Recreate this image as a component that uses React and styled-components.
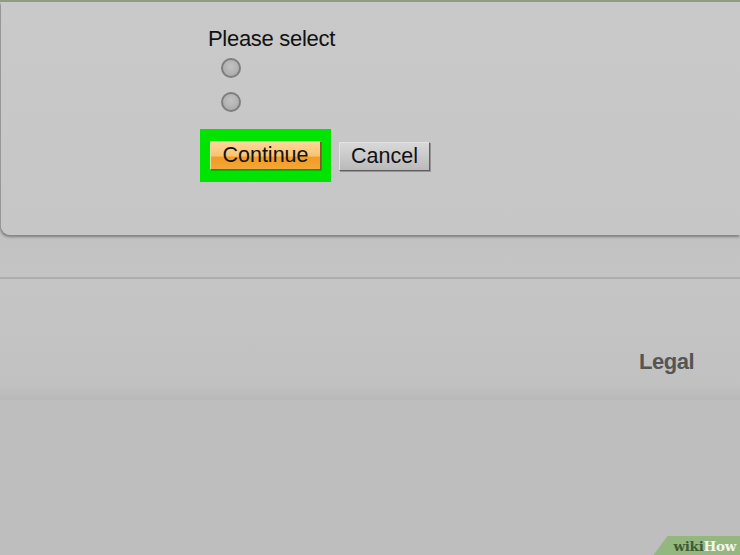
import React from 'react'
import styled, { createGlobalStyle } from 'styled-components';

const Global = createGlobalStyle`
html, body { margin:0; padding:0; }
body { background:#bfbfbf; font-family:"Liberation Sans", Arial, sans-serif; }
`

const App = () => {
    return(
    <Page>
    <Global/>
    <TopStrip/>
    <Panel>
    <Form>
    <Prompt>Please select</Prompt>
    <Radio/>
    <Radio second/>
    <Buttons>
    <Highlight>
    <Button primary>Continue</Button>
    </Highlight>
    <Button>Cancel</Button>
    </Buttons>
    </Form>
    </Panel>
    <Band/>
    <Footer>
    <Legal>Legal</Legal>
    </Footer>
    <Bottom>
    <Badge><Wiki>wiki</Wiki><How>How</How></Badge>
    </Bottom>
    </Page>
    );
};

export default App;

const Page = styled.div`
width:740px;
height:555px;
overflow:hidden;
display:flex;
flex-direction:column;
background:#bfbfbf;
`
const TopStrip = styled.div`
height:2px;
background:#8e9c84;
`
const Panel = styled.div`
height:233px;
margin-left:1px;
background:linear-gradient(180deg,#c9c9c9 0%,#c6c6c6 100%);
border-bottom-left-radius:9px;
box-shadow: -1px 2px 2px rgba(0,0,0,0.25), 0 3px 3px rgba(0,0,0,0.08);
position:relative;
z-index:1;
`
const Form = styled.div`
padding:24px 0 0 207px;
display:flex;
flex-direction:column;
align-items:flex-start;
`
const Prompt = styled.div`
font-size:22px;
color:#111;
line-height:26px;
letter-spacing:-0.3px;
`
const Radio = styled.span`
width:20px;
height:20px;
border-radius:50%;
margin:${p => p.second ? '14px' : '6px'} 0 0 13px;
box-sizing:border-box;
border:2px solid #7e7e7e;
background:radial-gradient(circle at 50% 40%,#c2c2c2,#a6a6a6);
`
const Buttons = styled.div`
display:flex;
align-items:center;
gap:8px;
margin:17px 0 0 -8px;
`
const Highlight = styled.div`
background:#00e400;
padding:12px 10px 12px 10px;
display:flex;
`
const Button = styled.div`
height:29px;
box-sizing:border-box;
display:flex;
align-items:center;
justify-content:center;
font-size:21.5px;
color:#111;
margin-top:${p => p.primary ? '0' : '2px'};
width:${p => p.primary ? '111px' : '91px'};
border:1px solid ${p => p.primary ? '#7a5a2a' : '#5e5e5e'};
border-top-color:${p => p.primary ? '#f0dcb0' : '#e4e4e4'};
border-left-color:${p => p.primary ? '#f0dcb0' : '#e4e4e4'};
background:${p => p.primary
  ? 'linear-gradient(180deg,#fcd89a 0%,#f9c370 52%,#f19c24 56%,#f4a636 100%)'
  : 'linear-gradient(180deg,#d8d8d8 0%,#c8c8c8 55%,#bababa 100%)'};
box-shadow: 1px 1px 0 ${p => p.primary ? 'rgba(0,0,0,0.2)' : 'rgba(0,0,0,0.25)'};
`
const Band = styled.div`
height:42px;
background:linear-gradient(180deg,#c2c2c2,#c4c4c4);
border-bottom:2px solid #adadad;
`
const Footer = styled.div`
height:121px;
box-sizing:border-box;
display:flex;
align-items:flex-start;
justify-content:flex-end;
padding:70px 46px 0 0;
background:linear-gradient(180deg,#c5c5c5 0%,#c3c3c3 50%,#c1c1c1 88%,#b8b8b8 100%);
`
const Legal = styled.div`
font-size:22px;
line-height:26px;
font-weight:bold;
color:#555;
letter-spacing:-0.5px;
`
const Bottom = styled.div`
flex:1;
position:relative;
background:#bebebe;
`
const Badge = styled.div`
position:absolute;
right:0;
bottom:0;
height:19px;
padding:0 4px 0 20px;
display:flex;
align-items:center;
background:#93b77e;
clip-path:polygon(14px 0,100% 0,100% 100%,0 100%);
font-family:"DejaVu Serif","Liberation Serif",serif;
font-weight:bold;
font-size:13.5px;
letter-spacing:-0.3px;
`
const Wiki = styled.span`
color:#3f5a36;
`
const How = styled.span`
color:#f3f6ef;
`
